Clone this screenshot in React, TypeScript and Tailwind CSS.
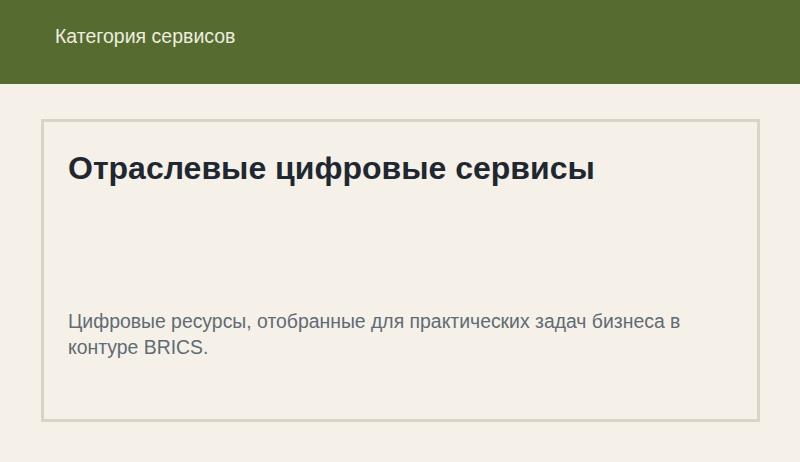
import React from "react";

const App: React.FC = () => {
  return (
    <div className="min-h-[462px] bg-[#f5f1e9] font-['Liberation_Sans',Arial,sans-serif]">
      {/* Top bar */}
      <header className="h-[84px] bg-[#556b2f] pl-[55px] pt-[24px]">
        <span className="text-[19.5px] leading-6 text-[#eeeddf]">Категория сервисов</span>
      </header>

      <main className="pt-[35px] pl-[41px]">
        <section className="w-[719px] h-[303px] border-[3px] border-[#d9d4c5] px-6 pt-7 flex flex-col">
          <h1 className="text-[32px] leading-9 font-bold text-[#1f2830]">
            Отраслевые цифровые сервисы
          </h1>
          <p className="mt-[122px] text-[19.4px] leading-[26px] text-[#606b74]">
            Цифровые ресурсы, отобранные для практических задач бизнеса в контуре BRICS.
          </p>
        </section>
      </main>
    </div>
  );
};

export default App;
